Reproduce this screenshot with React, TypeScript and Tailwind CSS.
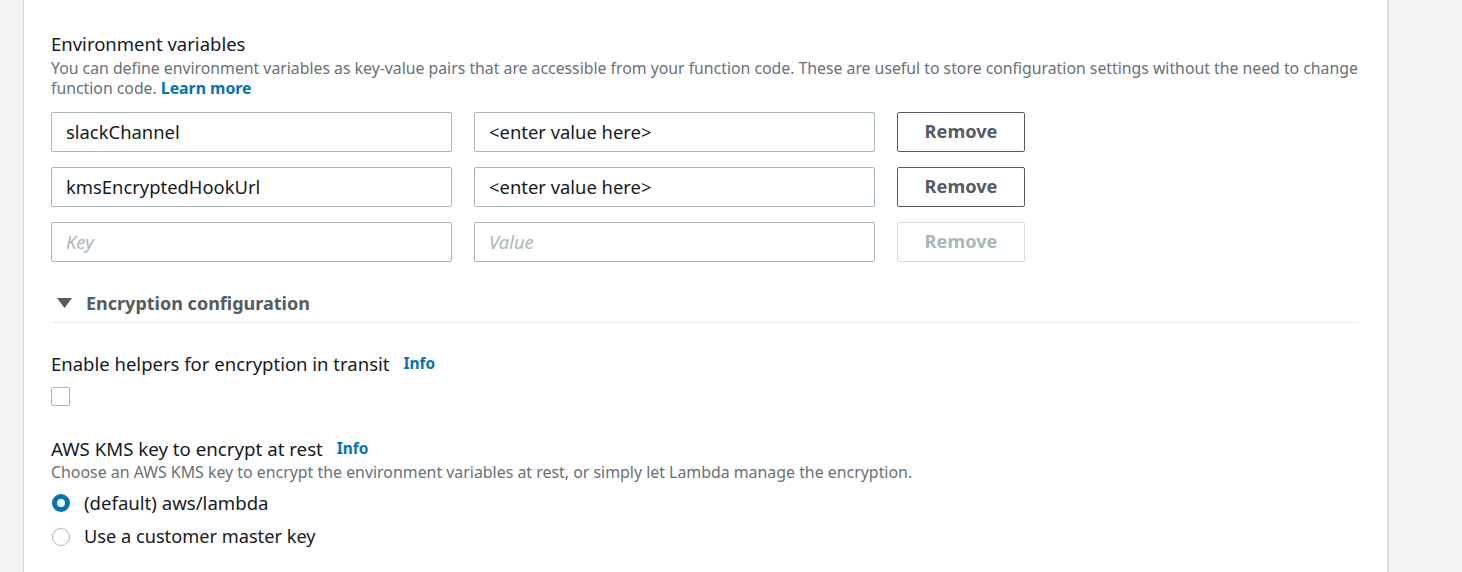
import React from "react";

const font = { fontFamily: '"Noto Sans", "Open Sans", Arial, sans-serif' };

function Row({ k, v, placeholder, disabled }: { k?: string; v?: string; placeholder?: boolean; disabled?: boolean }) {
  return (
    <div className="flex items-center gap-[22px] h-[40px]">
      <div className="w-[401px] h-[40px] border border-[#aab7b8] rounded-[2px] flex items-center px-[14px] text-[18.4px]">
        {placeholder ? <span className="italic text-[#aab7b8]">Key</span> : <span className="text-[#16191f]">{k}</span>}
      </div>
      <div className="w-[401px] h-[40px] border border-[#aab7b8] rounded-[2px] flex items-center px-[14px] text-[18.4px]">
        {placeholder ? <span className="italic text-[#aab7b8]">Value</span> : <span className="text-[#16191f]">{v}</span>}
      </div>
      <div
        className={
          "w-[128px] h-[40px] rounded-[2px] flex items-center justify-center text-[18.2px] font-bold " +
          (disabled ? "border border-[#d5dbdb] text-[#aab7b8]" : "border border-[#545b64] text-[#545b64]")
        }
      >
        Remove
      </div>
    </div>
  );
}

export default function App() {
  return (
    <div className="w-[1462px] h-[572px] bg-[#f2f3f3] flex overflow-hidden" style={font}>
      <div className="w-[23px] shrink-0" />
      <div className="w-[1366px] shrink-0 bg-white border-l border-r-2 border-l-[#d5dbdb] border-r-[#d5dbdb] pl-[27px] pr-[28px] pt-[32px]">
        <div className="text-[18.5px] leading-[24px] text-[#16191f]">Environment variables</div>
        <div className="mt-[2px] text-[15.8px] leading-[20px] text-[#687078]">
          You can define environment variables as key-value pairs that are accessible from your function code. These are useful to store configuration settings without the need to change function code.{" "}
          <span className="font-bold text-[#0073bb]">Learn more</span>
        </div>
        <div className="mt-[14px] flex flex-col gap-[15px]">
          <Row k="slackChannel" v="<enter value here>" />
          <Row k="kmsEncryptedHookUrl" v="<enter value here>" />
          <Row placeholder disabled />
        </div>
        <div className="mt-[27px] flex items-center h-[28px] border-b border-[#eaeded] box-content pb-[5px]">
          <svg width="15" height="11" viewBox="0 0 15 11" className="ml-[6px] mr-[14px]">
            <polygon points="0,0 15,0 7.5,10" fill="#545b64" />
          </svg>
          <span className="text-[18px] font-bold text-[#545b64]">Encryption configuration</span>
        </div>
        <div className="mt-[28px] flex items-center h-[26px]">
          <span className="text-[18.5px] text-[#16191f]">Enable helpers for encryption in transit</span>
          <span className="ml-[14px] text-[15.4px] font-bold text-[#0073bb]">Info</span>
        </div>
        <div className="mt-[10px] w-[19px] h-[19px] border border-[#aab7b8] rounded-[2px]" />
        <div className="mt-[30px] flex items-center h-[26px]">
          <span className="text-[18.7px] text-[#16191f]">AWS KMS key to encrypt at rest</span>
          <span className="ml-[14px] text-[15.4px] font-bold text-[#0073bb]">Info</span>
        </div>
        <div className="text-[15.9px] leading-[20px] text-[#687078]">
          Choose an AWS KMS key to encrypt the environment variables at rest, or simply let Lambda manage the encryption.
        </div>
        <div className="mt-[7px] flex items-center h-[28px]">
          <div className="ml-[1px] w-[18px] h-[18px] rounded-full border-[5px] border-[#0073bb] bg-white" />
          <span className="ml-[14px] text-[18.6px] text-[#16191f]">(default) aws/lambda</span>
        </div>
        <div className="mt-[6px] flex items-center h-[28px]">
          <div className="ml-[1px] w-[18px] h-[18px] rounded-full border border-[#aab7b8] bg-white" />
          <span className="ml-[14px] text-[18.2px] text-[#16191f]">Use a customer master key</span>
        </div>
      </div>
      <div className="flex-1" />
    </div>
  );
}
